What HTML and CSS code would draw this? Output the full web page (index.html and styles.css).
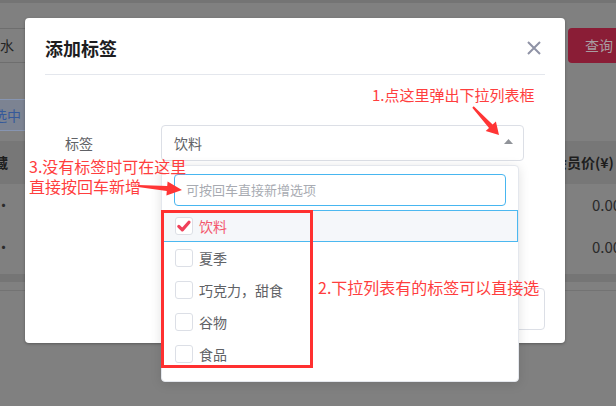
FILE: index.html
```html
<!DOCTYPE html>
<html lang="zh-CN">
<head>
<meta charset="utf-8">
<title>添加标签</title>
<link rel="stylesheet" href="styles.css">
</head>
<body>
<div class="page">
  <div class="strip"></div>
  <div class="row search-row">
    <div class="cell"><div class="bg-input">水</div></div>
    <div></div>
    <div class="cell"><div class="bg-btn">查询</div></div>
  </div>
  <div class="row tab-row">
    <div class="cell"><div class="bg-tab">选中</div></div>
  </div>
  <div class="row thead">
    <div class="cell th-left">收藏</div>
    <div></div>
    <div class="cell th-right">会员价(¥)</div>
  </div>
  <div class="row trow">
    <div class="cell td-left">·</div>
    <div></div>
    <div class="cell td-right">0.00</div>
  </div>
  <div class="row trow">
    <div class="cell td-left">·</div>
    <div></div>
    <div class="cell td-right">0.00</div>
  </div>
  <div class="band"></div>
  <div class="band-line"></div>
</div>

<div class="dialog">
  <div class="dlg-header">
    <span class="dlg-title">添加标签</span>
    <svg class="dlg-close" viewBox="0 0 14 14"><path d="M1 1L13 13M13 1L1 13" stroke="#8f93a6" stroke-width="2" fill="none"/></svg>
  </div>
  <div class="dlg-body">
    <div class="form-item">
      <label class="form-label">标签</label>
      <div class="select">
        <span class="select-value">饮料</span>
        <svg class="caret" viewBox="0 0 9 5"><polygon points="0,5 4.5,0 9,5" fill="#909399"/></svg>
        <div class="dropdown">
          <div class="dd-search"><div class="dd-input">可按回车直接新增选项</div></div>
          <ul class="dd-options">
            <li class="dd-option is-selected"><span class="cb"><svg viewBox="0 0 18 18" class="check"><path d="M3.8 9.4L7.3 12.9L14 5.2" stroke="#f0405a" stroke-width="3.2" fill="none" stroke-linecap="round" stroke-linejoin="round"/></svg></span><span>饮料</span></li>
            <li class="dd-option"><span class="cb"></span><span>夏季</span></li>
            <li class="dd-option"><span class="cb"></span><span>巧克力，甜食</span></li>
            <li class="dd-option"><span class="cb"></span><span>谷物</span></li>
            <li class="dd-option"><span class="cb"></span><span>食品</span></li>
          </ul>
          <div class="red-box"></div>
        </div>
      </div>
    </div>
    <div class="textarea"></div>
  </div>
</div>

<div class="ann ann-1">1.点这里弹出下拉列表框</div>
<div class="ann ann-2">2.下拉列表有的标签可以直接选</div>
<div class="ann ann-3">3.没有标签时可在这里<br>直接按回车新增</div>
<svg class="arrows" viewBox="0 0 616 406">
  <polygon fill="#ff3535" points="473.7,106.3 492.6,124.5 495.9,121.4 499,135 485.7,131 489,127.9 472.3,107.7"/>
  <polygon fill="#ff3535" points="138.1,185 167.2,186.1 167.6,181.6 182,190 166.4,195.6 166.8,191.1 137.9,187"/>
</svg>
</body>
</html>
```

FILE: styles.css
```css
html, body {
  margin: 0;
  padding: 0;
}
body {
  width: 616px;
  height: 406px;
  overflow: hidden;
  position: relative;
  background: #808080;
  font-family: "Noto Sans CJK SC", "Noto Sans", sans-serif;
}

/* dimmed background page */
.page {
  display: flex;
  flex-direction: column;
}
.strip {
  height: 3px;
  background: #747474;
}
.row {
  display: grid;
  grid-template-columns: 25px 1fr 51px;
}
.cell {
  overflow: hidden;
  white-space: nowrap;
}
.search-row {
  margin-top: 25px;
  height: 35px;
}
.bg-input {
  height: 35px;
  box-sizing: border-box;
  border-top: 1px solid #6e6e6e;
  border-bottom: 1px solid #6e6e6e;
  font-size: 14px;
  line-height: 33px;
  color: #242424;
}
.bg-btn {
  margin-left: 3px;
  height: 35px;
  background: #8a1d36;
  border-radius: 4px 0 0 4px;
  color: #a89da1;
  font-size: 14px;
  line-height: 35px;
  padding-left: 17px;
}
.tab-row {
  margin-top: 36px;
  height: 32px;
}
.bg-tab {
  height: 32px;
  box-sizing: border-box;
  border-top: 1px solid #8795b1;
  border-bottom: 1px solid #8795b1;
  background: #7c8392;
  color: #35599a;
  font-size: 14px;
  line-height: 30px;
  text-indent: -7px;
}
.thead {
  margin-top: 10px;
  height: 43px;
  background: #777777;
  font-size: 14px;
  font-weight: bold;
  line-height: 43px;
  color: #1e1e1e;
}
.th-left {
  text-indent: -20px;
}
.th-right {
  text-indent: -12px;
}
.trow {
  height: 42px;
  line-height: 42px;
  font-size: 15px;
  color: #2a2a2a;
}
.td-left {
  text-indent: -4px;
}
.td-right {
  text-indent: 27px;
}
.band {
  margin-top: 6px;
  height: 8px;
  background: #757575;
}
.band-line {
  margin-top: 8px;
  height: 1px;
  background: #737373;
}

/* dialog */
.dialog {
  position: absolute;
  left: 25px;
  top: 18px;
  width: 540px;
  height: 325px;
  box-sizing: border-box;
  padding: 0 20px;
  background: #fff;
  border-radius: 4px;
  box-shadow: 0 1px 3px rgba(0, 0, 0, 0.3);
}
.dlg-header {
  display: flex;
  align-items: center;
  justify-content: space-between;
  padding: 18px 0 14px;
  border-bottom: 1px solid #e4e7ed;
}
.dlg-title {
  font-size: 18px;
  line-height: 24px;
  font-weight: bold;
  color: #1d1d1f;
}
.dlg-close {
  width: 14px;
  height: 14px;
  margin-right: 4px;
}
.dlg-body {
  padding-top: 50px;
}
.form-item {
  display: flex;
}
.form-label {
  width: 116px;
  box-sizing: border-box;
  padding-left: 20px;
  font-size: 14px;
  line-height: 36px;
  color: #606266;
}
.select {
  position: relative;
  width: 363px;
  height: 36px;
  box-sizing: border-box;
  border: 1px solid #dcdfe6;
  border-radius: 4px;
  display: flex;
  align-items: center;
  padding: 0 10px 0 12px;
  font-size: 14px;
  color: #606266;
}
.caret {
  margin-left: auto;
  margin-top: -3px;
  width: 9px;
  height: 5px;
}
.textarea {
  margin-top: 127px;
  margin-left: 116px;
  height: 42px;
  box-sizing: border-box;
  border: 1px solid #dcdfe6;
  border-radius: 4px;
}

/* dropdown */
.dropdown {
  position: absolute;
  left: -1px;
  top: 39px;
  z-index: 5;
  width: 358px;
  height: 217px;
  box-sizing: border-box;
  border: 1px solid #e4e7ed;
  border-radius: 4px;
  background: #fff;
  box-shadow: 0 2px 12px rgba(0, 0, 0, 0.12);
}
.dd-search {
  padding: 8px 12px 0;
}
.dd-input {
  height: 32px;
  box-sizing: border-box;
  border: 1px solid #48b6f0;
  border-radius: 4px;
  padding-left: 11px;
  line-height: 30px;
  font-size: 13px;
  color: #a8abb2;
}
.dd-options {
  list-style: none;
  margin: 4px 0 0;
  padding: 0;
}
.dd-option {
  height: 32px;
  box-sizing: border-box;
  display: flex;
  align-items: center;
  gap: 6px;
  padding-left: 13px;
  font-size: 14px;
  color: #606266;
}
.dd-option.is-selected {
  background: #f5f7fa;
  border: 1px solid #4cb8f0;
  padding-left: 12px;
  color: #f3566d;
}
.cb {
  width: 18px;
  height: 18px;
  box-sizing: border-box;
  border: 1px solid #dcdfe6;
  border-radius: 3px;
  background: #fff;
  display: flex;
  align-items: center;
  justify-content: center;
}
.check {
  width: 18px;
  height: 18px;
  flex: none;
}
.red-box {
  position: absolute;
  left: -1px;
  top: 44px;
  width: 152px;
  height: 158px;
  box-sizing: border-box;
  border: 3px solid #ff3030;
}

/* annotations */
.ann {
  position: absolute;
  z-index: 10;
  color: #ff3e3e;
  font-size: 16px;
  line-height: 20px;
  white-space: nowrap;
}
.ann-1 {
  left: 372px;
  top: 85px;
  font-size: 15px;
}
.ann-2 {
  left: 318px;
  top: 277px;
}
.ann-3 {
  left: 29px;
  top: 156px;
}
.arrows {
  position: absolute;
  left: 0;
  top: 0;
  width: 616px;
  height: 406px;
  z-index: 11;
  pointer-events: none;
}
```
